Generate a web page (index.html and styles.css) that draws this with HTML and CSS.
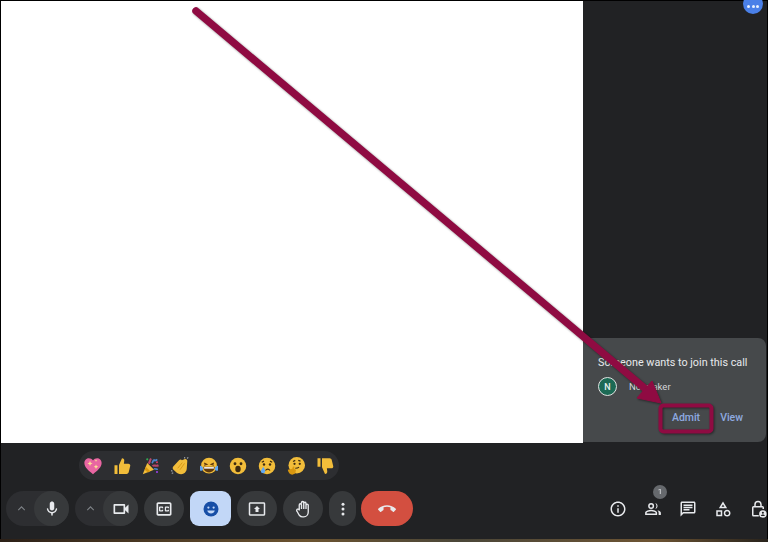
FILE: index.html
```html
<!DOCTYPE html>
<html lang="en">
<head>
  <meta charset="UTF-8">
  <title>Meeting</title>
  <link rel="stylesheet" href="styles.css">
</head>
<body>
<div class="app">
  <div class="main-row">
    <div class="stage"></div>
    <div class="side">
      <div class="bubble"><span></span><span></span><span></span></div>
      <div class="join-card">
        <div class="join-title">Someone wants to join this call</div>
        <div class="join-person">
          <div class="avatar">N</div>
          <div class="join-name">Notetaker</div>
        </div>
        <div class="join-actions">
          <span class="join-link">Admit</span>
          <span class="join-link">View</span>
        </div>
      </div>
    </div>
  </div>

  <div class="toolbar">
    <div class="toolbar-left">
      <div class="reactions">
        <svg class="emoji" viewBox="0 0 24 24"><path fill="#e966a2" d="M12 23C6 18 .5 13.500.5 8c0-4 3-6.500 6-6.500 2.200 0 4.300 1 5.500 3 1.200-2 3.300-3 5.500-3 3 0 6 2.500 6 6.500 0 5.500-5.500 10-11.500 15z"/><path fill="#fde293" d="M8 5l1 2.500 2.500 1L9 9.500 8 12l-1-2.500-2.500-1L7 7.500zM16 10l.9 2.100 2.100.9-2.100.9-.9 2.100-.9-2.100-2.100-.9 2.100-.9zM16 3l.5 1.300 1.300.5-1.300.5-.5 1.300-.5-1.300-1.300-.5 1.300-.5z"/></svg>
        <svg class="emoji" viewBox="0 0 24 24"><path fill="#f2bd3a" d="M2 11h4v11.500H2zM8 22.500V10.500l4-9c2 0 3.300 1.500 3 3.500L14.500 9h6c1.700 0 2.800 1.300 2.500 2.800l-2 8.300c-.3 1.400-1.400 2.400-2.800 2.400z"/></svg>
        <svg class="emoji" viewBox="0 0 24 24"><path fill="#f2bd3a" d="M1 23l6-15 9 9z"/><path fill="#d9970f" d="M5 13l6 6-3 1.500-4.500-3.500z"/><path fill="none" stroke="#b8476a" stroke-width="2.800" d="M9 9c2-3 1-4 3-7M14 12c3-2 4 1 8-1"/><path fill="none" stroke="#4b82c9" stroke-width="2.400" d="M13 8c2-1 1-3 3-4 1 1 3 1 4-1M16 16c2-1 3 1 5 0"/><circle cx="7" cy="3" r="1.500" fill="#34a853"/><circle cx="20" cy="7" r="1.300" fill="#d93a6e"/><circle cx="20" cy="20" r="1.300" fill="#a142f4"/></svg>
        <svg class="emoji" viewBox="0 0 24 24"><path fill="#f2bd3a" d="M3 12.500L11 4c1.200-1.200 3-1 3.500.3L18 3c2-.7 4 .8 3.700 2.800l-.7 10c-.4 4.200-3.500 7.200-7.500 7.200-3 0-5.500-1-7.300-3.200L3 16.500c-1-1.500-1-2.800 0-4z"/><path fill="none" stroke="#cf8c0a" stroke-width="1" d="M9 15l6-7.500M12 17l6-8.500"/><path fill="none" stroke="#9aa0a6" stroke-width="1.500" d="M0 18l2 1M1 22l2-1M18 0l.5 2M23 .5L21.500 2"/></svg>
        <svg class="emoji" viewBox="0 0 24 24"><circle cx="12" cy="11.500" r="10.500" fill="#f2bd3a"/><path fill="none" stroke="#5f3a0e" stroke-width="1.700" d="M5.500 8l3.500 1.800L5.500 11M18.500 8L15 9.800l3.500 1.200"/><path fill="#5f3a0e" d="M4.500 13h15c0 5-3.500 7.500-7.500 7.500S4.500 18 4.500 13z"/><path fill="#fff" d="M5.500 13.500h13v2h-13z"/><path fill="#5fa8f5" d="M0 11.500c2.500 0 5 2.500 4 5.500-1 2-5 1.500-5-.5zM24 11.500c-2.500 0-5 2.500-4 5.500 1 2 5 1.500 5-.5z"/></svg>
        <svg class="emoji" viewBox="0 0 24 24"><circle cx="12" cy="12" r="11" fill="#f2bd3a"/><circle cx="8" cy="9" r="1.900" fill="#3c2a10"/><circle cx="16" cy="9" r="1.900" fill="#3c2a10"/><ellipse cx="12" cy="16" rx="3.600" ry="4.300" fill="#3c2a10"/></svg>
        <svg class="emoji" viewBox="0 0 24 24"><circle cx="12" cy="12" r="11" fill="#f2bd3a"/><circle cx="8" cy="10" r="1.600" fill="#3c2a10"/><circle cx="16" cy="10" r="1.600" fill="#3c2a10"/><path fill="none" stroke="#3c2a10" stroke-width="1.500" d="M10 18c1.500-2.500 4.500-2.500 6 0M5 7l3-1.500M19 7l-3-1.500"/><path fill="#5fa8f5" d="M7 13c1.500 2 3 4.500 2.500 7-.5 2-5 2-5.500 0-.3-2.500 2-5 3-7z"/></svg>
        <svg class="emoji" viewBox="0 0 24 24"><circle cx="13" cy="11" r="11" fill="#f2bd3a"/><circle cx="10" cy="9" r="1.500" fill="#3c2a10"/><circle cx="17" cy="9" r="1.500" fill="#3c2a10"/><path fill="none" stroke="#3c2a10" stroke-width="1.500" d="M8 6l3-1.500M15 4.500l3 1M11 15c2 0 4-.5 5-1.500"/><path fill="#d9970f" d="M1 17l6-1.500 1-3 2 .5-.5 3 2.500 1-1 5-4 1.500c-3 0-5.500-3-6-6.500z"/></svg>
        <svg class="emoji" viewBox="0 0 24 24"><path fill="#f2bd3a" d="M2 1.500h4V13H2zM8 1.500V13.500l4 9c2 0 3.300-1.500 3-3.500l-.5-4h6c1.700 0 2.800-1.300 2.500-2.800l-2-8.300c-.3-1.400-1.400-2.400-2.800-2.400z"/></svg>
      </div>
      <div class="controls">
        <div class="split-btn">
          <span class="chevron"><svg viewBox="0 0 24 24"><path d="M6 15l6-6 6 6"/></svg></span>
          <span class="split-main"><svg class="icon" viewBox="0 0 24 24"><path d="M12 14c1.660 0 3-1.340 3-3V5c0-1.660-1.340-3-3-3S9 3.340 9 5v6c0 1.660 1.340 3 3 3zm5.910-3c-.49 0-.9.36-.98.85C16.520 14.200 14.470 16 12 16s-4.520-1.800-4.930-4.150c-.08-.49-.49-.85-.98-.85-.61 0-1.090.54-1 1.140.49 3 2.890 5.350 5.910 5.780V20c0 .55.45 1 1 1s1-.45 1-1v-2.080c3.020-.43 5.420-2.780 5.910-5.780.1-.6-.39-1.140-1-1.140z"/></svg></span>
        </div>
        <div class="split-btn">
          <span class="chevron"><svg viewBox="0 0 24 24"><path d="M6 15l6-6 6 6"/></svg></span>
          <span class="split-main"><svg class="icon icon-lg" viewBox="0 0 24 24"><path d="M15 8v8H5V8h10m1-2H4c-.55 0-1 .45-1 1v10c0 .55.45 1 1 1h12c.55 0 1-.45 1-1v-3.500l4 4v-11l-4 4V7c0-.55-.45-1-1-1z"/></svg></span>
        </div>
        <div class="ctl-btn"><svg class="icon icon-lg" viewBox="0 0 24 24"><path d="M19 4H5c-1.110 0-2 .9-2 2v12c0 1.100.89 2 2 2h14c1.100 0 2-.9 2-2V6c0-1.100-.9-2-2-2zm0 14H5V6h14v12zM7 15h3c.55 0 1-.45 1-1v-1H9.500v.5h-2v-3h2v.5H11v-1c0-.55-.45-1-1-1H7c-.55 0-1 .45-1 1v4c0 .55.45 1 1 1zm7 0h3c.55 0 1-.45 1-1v-1h-1.500v.5h-2v-3h2v.5H18v-1c0-.55-.45-1-1-1h-3c-.55 0-1 .45-1 1v4c0 .55.45 1 1 1z"/></svg></div>
        <div class="ctl-btn ctl-active"><svg class="icon" viewBox="0 0 24 24"><circle cx="12" cy="12" r="10" fill="#174ea6"/><circle cx="8.500" cy="10" r="1.500" fill="#c2d7f7"/><circle cx="15.500" cy="10" r="1.500" fill="#c2d7f7"/><path fill="#c2d7f7" d="M7 14h10c-.6 2.400-2.600 4-5 4s-4.400-1.600-5-4z"/></svg></div>
        <div class="ctl-btn"><svg class="icon" viewBox="0 0 24 24"><path d="M21 3H3c-1.110 0-2 .89-2 2v14c0 1.110.89 2 2 2h18c1.110 0 2-.89 2-2V5c0-1.110-.89-2-2-2zm0 16.020H3V4.980h18v14.040zM10 12H8l4-4 4 4h-2v4h-4v-4z"/></svg></div>
        <div class="ctl-btn"><svg class="icon icon-line" viewBox="0 0 24 24"><path d="M7 14V6.500a1.500 1.500 0 0 1 3 0V12m0-7.500V3.500a1.500 1.500 0 0 1 3 0V12m0-7.500a1.500 1.500 0 0 1 3 0V12m0-5a1.500 1.500 0 0 1 3 0V16c0 3.500-2.500 6.500-6 6.500h-1.500c-2 0-3.300-.8-4.500-2.200L4 15c-.8-1-.4-2.300.6-2.700 1-.4 1.800 0 2.400.7"/></svg></div>
        <div class="ctl-btn ctl-narrow"><svg class="icon" viewBox="0 0 24 24"><circle cx="12" cy="5.500" r="2"/><circle cx="12" cy="12" r="2"/><circle cx="12" cy="18.500" r="2"/></svg></div>
        <div class="ctl-btn ctl-hangup"><svg class="icon" viewBox="0 0 24 24"><path d="M12 9c-1.600 0-3.150.25-4.600.72v3.100c0 .39-.23.74-.56.9-.98.49-1.870 1.120-2.660 1.850-.18.18-.43.28-.7.28-.28 0-.53-.11-.71-.29L.29 13.080c-.18-.17-.29-.42-.29-.7 0-.28.11-.53.29-.71C3.340 8.780 7.460 7 12 7s8.660 1.780 11.710 4.670c.18.18.29.43.29.71 0 .28-.11.53-.29.71l-2.480 2.480c-.18.18-.43.29-.71.29-.27 0-.52-.11-.7-.28-.79-.74-1.690-1.360-2.670-1.850-.33-.16-.56-.5-.56-.9v-3.100C15.150 9.250 13.600 9 12 9z"/></svg></div>
      </div>
    </div>
    <div class="toolbar-right">
      <div class="tool"><svg class="icon" viewBox="0 0 24 24"><path d="M11 7h2v2h-2zm0 4h2v6h-2zm1-9C6.480 2 2 6.480 2 12s4.480 10 10 10 10-4.480 10-10S17.520 2 12 2zm0 18c-4.410 0-8-3.590-8-8s3.590-8 8-8 8 3.590 8 8-3.590 8-8 8z"/></svg></div>
      <div class="tool">
        <span class="count">1</span>
        <svg class="icon" viewBox="0 0 24 24"><path d="M9.500 4a4 4 0 1 0 0 8 4 4 0 0 0 0-8zm0 2a2 2 0 1 1 0 4 2 2 0 0 1 0-4zM9.500 13C6.800 13 1.500 14.300 1.500 17v3h16v-3c0-2.700-5.300-4-8-4zm-6 5v-1c.2-.8 3.500-2 6-2s5.800 1.200 6 2v1z"/><path d="M15 4.100a4 4 0 0 1 0 7.800 6 6 0 0 0 0-7.800zM18 13.500c2.500.5 4.500 1.700 4.500 3.500v3h-3v-3c0-1.400-.6-2.600-1.500-3.500z"/></svg>
      </div>
      <div class="tool"><svg class="icon" viewBox="0 0 24 24"><path d="M20 2H4c-1.100 0-2 .9-2 2v18l4-4h14c1.100 0 2-.9 2-2V4c0-1.100-.9-2-2-2zm0 14H5.170L4 17.170V4h16v12zM6 12h8v2H6zm0-3h12v2H6zm0-3h12v2H6z"/></svg></div>
      <div class="tool"><svg class="icon" viewBox="0 0 24 24"><path d="M12 2l-5.500 9h11L12 2zm0 3.840L13.930 9h-3.870L12 5.840zM17.500 13c-2.490 0-4.500 2.010-4.500 4.500s2.010 4.500 4.500 4.500 4.500-2.010 4.500-4.500-2.010-4.500-4.500-4.500zm0 7c-1.380 0-2.500-1.120-2.500-2.500s1.120-2.500 2.500-2.500 2.500 1.120 2.500 2.500-1.120 2.500-2.500 2.500zM3 21.500h8v-8H3v8zm2-6h4v4H5v-4z"/></svg></div>
      <div class="tool"><svg class="icon" viewBox="0 0 24 24"><path d="M12 1a5 5 0 0 0-5 5v2H6a2 2 0 0 0-2 2v10a2 2 0 0 0 2 2h7v-2H6V10h12v2h2v-2a2 2 0 0 0-2-2h-1V6a5 5 0 0 0-5-5zm0 2a3 3 0 0 1 3 3v2H9V6a3 3 0 0 1 3-3z"/><circle cx="18.500" cy="18.500" r="5"/><circle cx="18.500" cy="17" r="1.400" fill="#212224"/><path fill="#212224" d="M15.800 21.200c.5-1.300 1.500-1.800 2.700-1.800s2.200.5 2.700 1.800z"/></svg></div>
    </div>
  </div>
  <div class="bottom-strip"></div>

  <!-- annotation drawn over the screenshot -->
  <svg class="annotation" viewBox="0 0 768 542">
    <path class="arrow-shaft" d="M196 11L648 391"/>
    <path class="arrow-head" d="M661 403L637 398L652 381z"/>
    <rect class="admit-box" x="660.500" y="405.500" width="51" height="26" rx="3"/>
  </svg>
</div>
</body>
</html>
```

FILE: styles.css
```css
html, body {
  height: 100%;
  margin: 0;
  background: #000;
  font-family: Roboto, 'Liberation Sans', Arial, sans-serif;
  color: #e8eaed;
  overflow: hidden;
}

.app {
  position: relative;
  width: 768px;
  height: 542px;
  box-sizing: border-box;
  padding: 1px 1px 0 1px;
  display: flex;
  flex-direction: column;
  filter: blur(.5px);
}

.main-row {
  display: flex;
  height: 442px;
}
.stage {
  width: 582px;
  background: #fff;
}
.side {
  position: relative;
  flex: 1;
  background: #212224;
  display: flex;
  flex-direction: column;
  justify-content: flex-end;
  padding-bottom: 1px;
}

.bubble {
  position: absolute;
  top: -8px;
  right: 4px;
  width: 20px;
  height: 21px;
  border-radius: 50%;
  background: #4a80e8;
  display: flex;
  align-items: center;
  justify-content: center;
  gap: 1.500px;
  padding-top: 5px;
  box-sizing: border-box;
}
.bubble span {
  width: 3px;
  height: 3px;
  border-radius: 50%;
  background: #e8f0fe;
}

.join-card {
  width: 183px;
  height: 104px;
  box-sizing: border-box;
  background: #46494b;
  border-radius: 0 8px 8px 0;
  padding: 18px 10px 0 15px;
  display: flex;
  flex-direction: column;
}
.join-title {
  font-size: 10.800px;
  line-height: 14px;
  white-space: nowrap;
}
.join-person {
  display: flex;
  align-items: center;
  gap: 12px;
  margin-top: 7px;
}
.avatar {
  width: 17px;
  height: 17px;
  border: 1.500px solid #dfe3e1;
  border-radius: 50%;
  background: #1c6a55;
  color: #e6f2ee;
  font-size: 9px;
  font-weight: 500;
  display: flex;
  align-items: center;
  justify-content: center;
}
.join-name {
  font-size: 9.500px;
  color: #d5d7da;
}
.join-actions {
  display: flex;
  justify-content: flex-end;
  gap: 20px;
  margin-top: 15px;
  padding-right: 13px;
}
.join-link {
  font-size: 10.500px;
  font-weight: 500;
  line-height: 14px;
  color: #8ea9e0;
}

.toolbar {
  flex: 1;
  background: #212224;
  display: flex;
  justify-content: space-between;
  padding: 8px 0 0 5px;
}
.toolbar-left {
  display: flex;
  flex-direction: column;
  align-items: flex-start;
  gap: 11px;
}
.reactions {
  margin-left: 73px;
  height: 29px;
  width: 260px;
  box-sizing: border-box;
  padding: 0 5px;
  border-radius: 15px;
  background: #2d2e31;
  display: flex;
  align-items: center;
  justify-content: space-between;
}
.emoji {
  width: 18px;
  height: 18px;
}

.controls {
  display: flex;
  gap: 6px;
}
.icon {
  width: 18px;
  height: 18px;
  flex: none;
  fill: #e8eaed;
}
.icon-lg {
  width: 20px;
  height: 20px;
}
.icon-line {
  fill: none;
  stroke: #e8eaed;
  stroke-width: 1.800;
  stroke-linejoin: round;
}
.split-btn {
  width: 63px;
  height: 35px;
  border-radius: 18px;
  background: #2d2e31;
  display: flex;
  align-items: center;
  justify-content: space-between;
}
.chevron {
  width: 25px;
  padding-left: 3px;
  display: flex;
  justify-content: center;
}
.chevron svg {
  width: 13px;
  height: 13px;
  fill: none;
  stroke: #7f8387;
  stroke-width: 2;
}
.split-main {
  width: 35px;
  height: 35px;
  border-radius: 50%;
  background: #37393b;
  display: flex;
  align-items: center;
  justify-content: center;
}
.ctl-btn {
  width: 40px;
  height: 35px;
  border-radius: 18px;
  background: #37393b;
  display: flex;
  align-items: center;
  justify-content: center;
}
.ctl-active {
  width: 41px;
  background: #c2d7f7;
  border-radius: 9px;
}
.ctl-narrow {
  width: 27px;
  margin-right: -1px;
}
.ctl-hangup {
  width: 52px;
  background: #d34f40;
}

.toolbar-right {
  display: flex;
  align-items: flex-end;
  gap: 17px;
  padding: 0 0 21px 0;
}
.tool {
  position: relative;
  width: 18px;
  height: 18px;
  display: flex;
  align-items: center;
  justify-content: center;
}
.count {
  position: absolute;
  top: -15px;
  left: 9px;
  width: 14px;
  height: 14px;
  border-radius: 50%;
  background: #66696d;
  font-size: 8px;
  line-height: 14px;
  text-align: center;
}

.bottom-strip {
  height: 3px;
  margin: 0 -1px;
  background: linear-gradient(90deg, #2c2017 0%, #6b5330 40%, #4a4638 60%, #6d5433 85%, #28231c 100%);
}

.annotation {
  position: absolute;
  top: 0;
  left: 0;
  width: 768px;
  height: 542px;
  pointer-events: none;
  filter: drop-shadow(1px 1px 1px rgba(0,0,0,.45));
}
.arrow-shaft {
  fill: none;
  stroke: #8f0b42;
  stroke-width: 7.500;
  stroke-linecap: round;
}
.arrow-head {
  fill: #8f0b42;
  stroke: #8f0b42;
  stroke-linejoin: round;
}
.admit-box {
  fill: none;
  stroke: #8f0b42;
  stroke-width: 4;
}
```
